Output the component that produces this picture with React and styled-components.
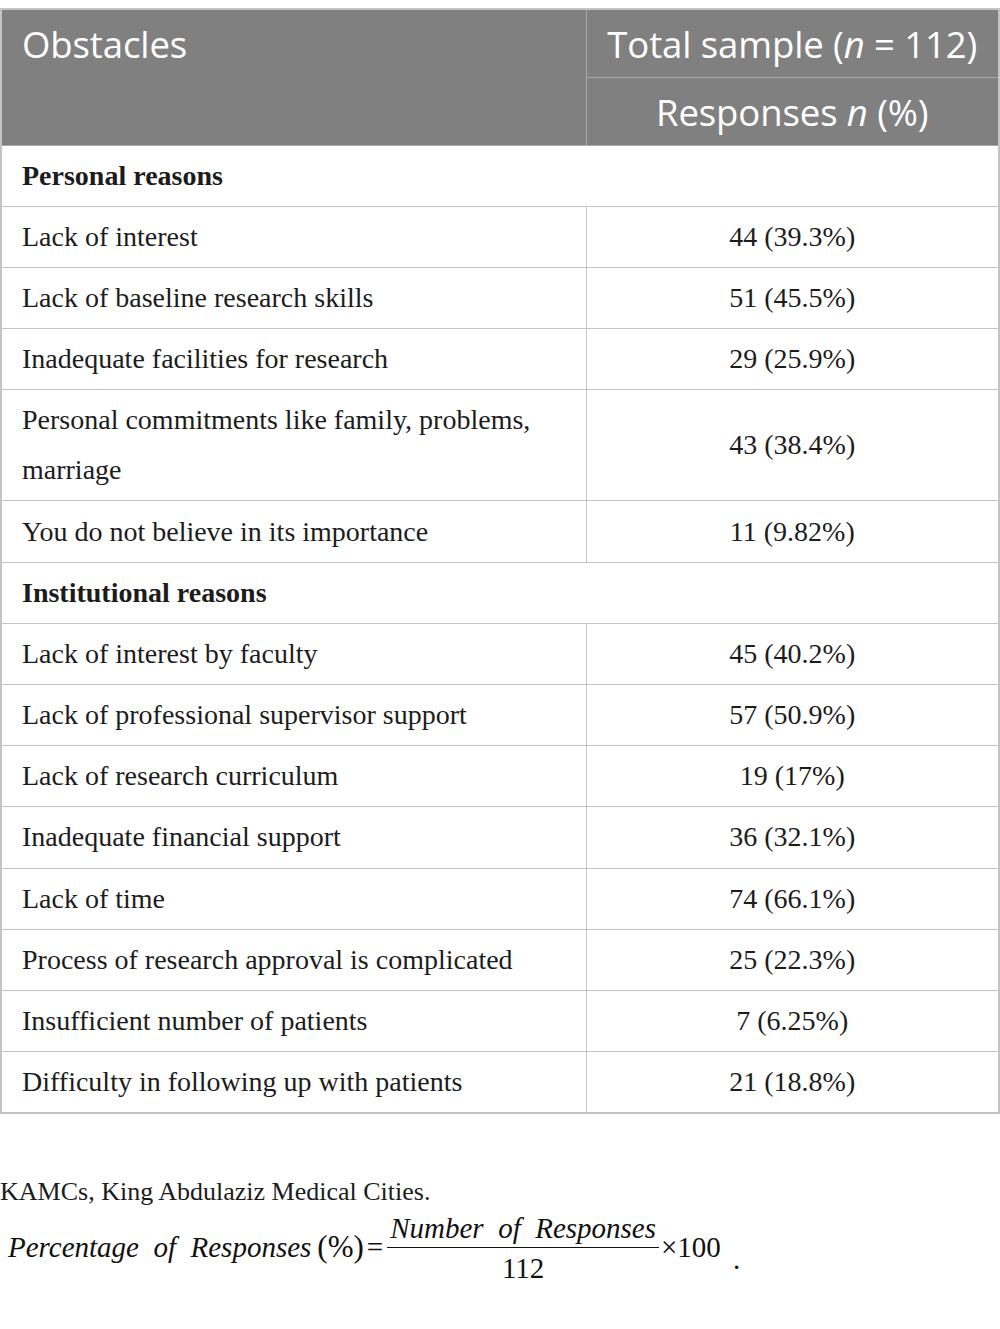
import React from 'react';
import styled, {createGlobalStyle} from 'styled-components';

const GlobalStyle = createGlobalStyle`
  body {
    margin: 0;
    background: #fff;
  }
`;

const sections = [
  {
    title: 'Personal reasons',
    rows: [
      ['Lack of interest', '44 (39.3%)'],
      ['Lack of baseline research skills', '51 (45.5%)'],
      ['Inadequate facilities for research', '29 (25.9%)'],
      ['Personal commitments like family, problems, marriage', '43 (38.4%)'],
      ['You do not believe in its importance', '11 (9.82%)'],
    ],
  },
  {
    title: 'Institutional reasons',
    rows: [
      ['Lack of interest by faculty', '45 (40.2%)'],
      ['Lack of professional supervisor support', '57 (50.9%)'],
      ['Lack of research curriculum', '19 (17%)'],
      ['Inadequate financial support', '36 (32.1%)'],
      ['Lack of time', '74 (66.1%)'],
      ['Process of research approval is complicated', '25 (22.3%)'],
      ['Insufficient number of patients', '7 (6.25%)'],
      ['Difficulty in following up with patients', '21 (18.8%)'],
    ],
  },
];

const App = () => {
  return (
    <Page>
      <GlobalStyle />
      <Table>
        <colgroup>
          <col style={{width: 585}} />
          <col />
        </colgroup>
        <thead>
          <tr>
            <HeadCell rowSpan={2} align="left">Obstacles</HeadCell>
            <HeadCell>Total sample (<i>n</i> = 112)</HeadCell>
          </tr>
          <tr>
            <HeadCell>Responses <i>n</i> (%)</HeadCell>
          </tr>
        </thead>
        <tbody>
          {sections.map(section => (
            <React.Fragment key={section.title}>
              <tr>
                <SectionCell colSpan={2}>{section.title}</SectionCell>
              </tr>
              {section.rows.map(([name, value]) => (
                <tr key={name}>
                  <Cell>{name}</Cell>
                  <Cell center>{value}</Cell>
                </tr>
              ))}
            </React.Fragment>
          ))}
        </tbody>
      </Table>
      <Footnote>KAMCs, King Abdulaziz Medical Cities.</Footnote>
      <Formula>
        <MathText>Percentage&nbsp; of&nbsp; Responses</MathText>
        <Paren>(%)</Paren>
        <Eq>=</Eq>
        <Fraction>
          <Numer>Number&nbsp; of&nbsp; Responses</Numer>
          <Denom>112</Denom>
        </Fraction>
        <Times>×100</Times>
        <Dot>.</Dot>
      </Formula>
    </Page>
  );
};

export default App;

const Page = styled.div`
  width: 1000px;
  padding-top: 8px;
`;

const Table = styled.table`
  width: 1000px;
  border-collapse: collapse;
  table-layout: fixed;
  border: 2px solid #c4c4c4;
`;

const HeadCell = styled.th`
  background: #7f807f;
  color: #fff;
  font-family: "Open Sans", sans-serif;
  font-weight: 400;
  font-size: 36.5px;
  letter-spacing: -0.1px;
  text-align: ${props => props.align === 'left' ? 'left' : 'center'};
  vertical-align: top;
  height: 68px;
  padding: 11px 20px 0 20px;
  box-sizing: border-box;
  border: 1.5px solid #a9aaa9;
  line-height: 46px;
  white-space: nowrap;
  i {
    font-style: italic;
  }
`;

const Cell = styled.td`
  font-family: "Liberation Serif", serif;
  font-size: 28px;
  color: #1c1c1c;
  line-height: 50px;
  padding: 5.1px 20px 5.1px 20px;
  border: 1.5px solid #c4c4c4;
  text-align: ${props => props.center ? 'center' : 'left'};
  vertical-align: middle;
`;

const SectionCell = styled(Cell)`
  font-weight: bold;
`;

const Footnote = styled.div`
  margin-top: 63px;
  font-family: "Liberation Serif", serif;
  font-size: 26px;
  color: #1c1c1c;
  line-height: 30px;
`;

const Formula = styled.div`
  display: flex;
  align-items: center;
  padding-left: 8px;
  height: 80px;
  font-family: "Liberation Serif", serif;
  font-size: 29px;
  color: #111;
`;

const MathText = styled.span`
  font-style: italic;
`;

const Paren = styled.span`
  margin-left: 6px;
  font-size: 31px;
`;

const Eq = styled.span`
  margin: 0 4px 0 3px;
`;

const Fraction = styled.span`
  display: inline-flex;
  flex-direction: column;
  align-items: center;
  margin-top: 6px;
`;

const Numer = styled.span`
  font-style: italic;
  padding: 0 3px 3px;
  border-bottom: 1.5px solid #111;
  line-height: 32px;
`;

const Denom = styled.span`
  line-height: 40px;
`;

const Times = styled.span`
  margin-left: 2px;
`;

const Dot = styled.span`
  margin-left: 12px;
  margin-top: 24px;
`;
